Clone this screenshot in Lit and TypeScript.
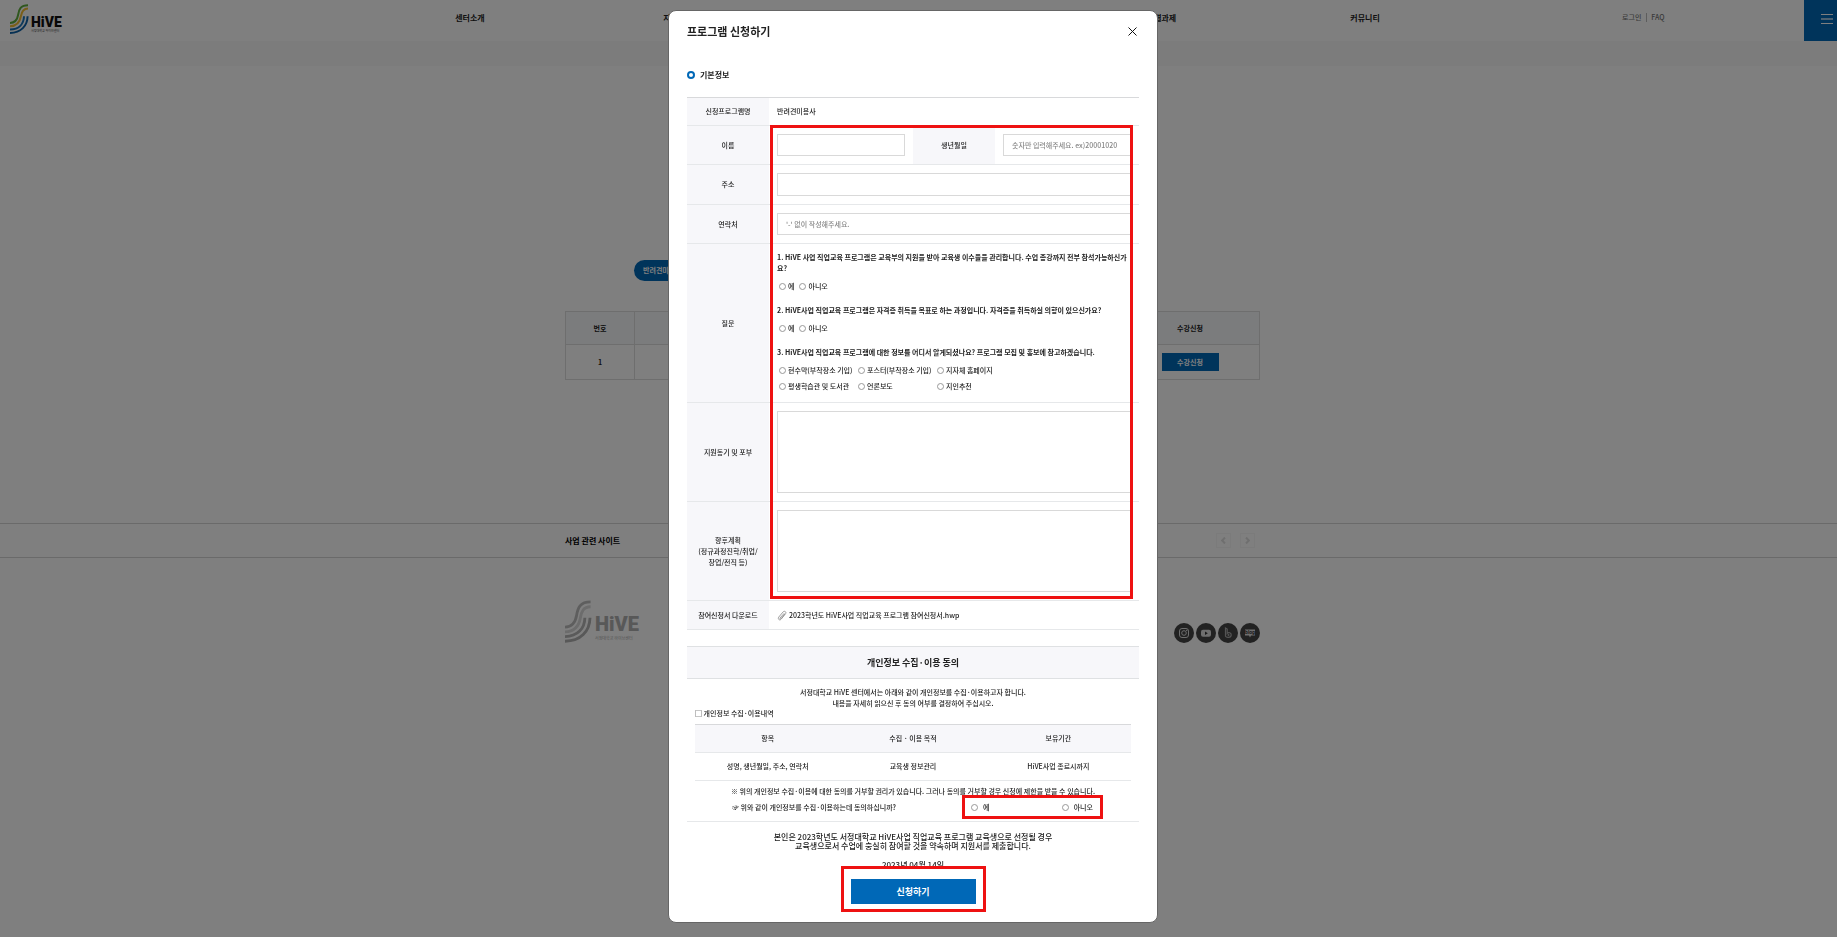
import { LitElement, html, css, svg } from "lit";
import { customElement, property } from "lit/decorators.js";

@customElement("hive-logo")
export class HiveLogo extends LitElement {
  @property({ type: Boolean, reflect: true }) mono = false;

  static styles = css`
    :host {
      display: flex;
      gap: 2px;
      color: #111;
    }
    .mark {
      width: 19px;
      height: 30px;
    }
    .words {
      display: flex;
      flex-direction: column;
      justify-content: flex-end;
    }
    .name {
      font: 900 14px/12px Roboto, "Liberation Sans", sans-serif;
    }
    .sub {
      font-size: 3px;
      line-height: 6px;
      white-space: nowrap;
      color: #444;
    }
    :host([mono]) {
      gap: 3px;
      color: #b0b0b0;
    }
    :host([mono]) .mark {
      width: 27px;
      height: 43px;
    }
    :host([mono]) .name {
      font-size: 20px;
      line-height: 18px;
    }
    :host([mono]) .sub {
      font-size: 4px;
      line-height: 10px;
      color: #aaa;
    }
  `;

  render() {
    const tone = this.mono
      ? ["#bdbdbd", "#d8d8d8", "#b4b4b4", "#b0b0b0"]
      : ["#5fae3c", "#f2bd33", "#1b73b8", "#0f62a8"];
    return html`
      <svg class="mark" viewBox="0 0 19 30" fill="none" stroke-width="2" aria-hidden="true">
        ${svg`
          <path stroke=${tone[0]} d="M18 1.2C10.5 1.2 9 5.5 8.2 10.5C7.3 16 5 18.8 0 19"/>
          <path stroke=${tone[1]} d="M18 4.6C13 4.6 11.6 8 10.8 12.5C9.8 18.5 6.5 22 0 22.3"/>
          <path stroke=${tone[2]} d="M14 12.3C13.8 20 9 25.3 0 25.6"/>
          <path stroke=${tone[3]} d="M17.6 12.3C17.4 22 11 28.6 0 28.9"/>
        `}
      </svg>
      <div class="words">
        <span class="name">HiVE</span>
        <span class="sub">서정대학교 하이브센터</span>
      </div>
    `;
  }
}

@customElement("site-page")
export class SitePage extends LitElement {
  static styles = css`
    :host {
      display: block;
      min-height: 100vh;
      background: #fff;
      color: #222;
    }
    a {
      color: inherit;
      text-decoration: none;
    }
    .header {
      display: flex;
      justify-content: space-between;
      height: 41px;
    }
    .brand {
      flex: 0 0 348px;
      padding: 4px 0 0 10px;
    }
    .nav {
      flex: 1;
      display: grid;
      grid-template-columns: repeat(5, 1fr);
      padding-top: 12px;
      text-align: center;
      font-size: 8px;
      line-height: 12px;
      font-weight: 700;
      white-space: nowrap;
    }
    .side {
      flex: 0 0 360px;
      display: flex;
      justify-content: space-between;
    }
    .member {
      display: flex;
      gap: 5px;
      height: 9px;
      padding: 13px 0 0 145px;
      font-size: 7px;
      line-height: 9px;
      font-weight: 500;
      color: #777;
    }
    .member a + a {
      border-left: 1px solid #bbb;
      padding-left: 4px;
    }
    .menu {
      width: 33px;
      height: 41px;
      border: 0;
      padding: 14px 4px 17px 17px;
      background: #0068b7;
      display: flex;
      flex-direction: column;
      justify-content: space-between;
    }
    .menu i {
      height: 1px;
      background: #fff;
    }
    .menu i:nth-child(2) {
      height: 2px;
      opacity: 0.6;
    }
    .strip {
      height: 25px;
      background: #f8f8f8;
    }
    .inner {
      width: 695px;
      max-width: 100%;
      margin: 0 auto;
    }
    .body,
    .links,
    .footer {
      padding-right: 12px;
    }
    .body {
      padding-top: 194px;
      height: 263px;
    }
    .pill {
      display: block;
      width: 58px;
      margin: 0 0 30px 69px;
      padding: 0 9px;
      border-radius: 11px;
      background: #0068b7;
      color: #fff;
      font-size: 7px;
      line-height: 21px;
      font-weight: 700;
    }
    .courses {
      width: 100%;
      table-layout: fixed;
      border-collapse: collapse;
      font-size: 7px;
      text-align: center;
    }
    .courses th,
    .courses td {
      border: 1px solid #dcdcdc;
      height: 35px;
      padding: 0;
      box-sizing: border-box;
      font-weight: 700;
    }
    .courses th {
      height: 33px;
      background: #f7f8fb;
    }
    .courses .no {
      width: 69px;
    }
    .courses .go {
      width: 139px;
    }
    .apply {
      width: 57px;
      height: 18px;
      border: 0;
      padding: 0;
      background: #0068b7;
      color: #fff;
      font: inherit;
      font-weight: 700;
    }
    .links {
      border: solid #d4d4d4;
      border-width: 1px 0;
    }
    .links .inner {
      display: flex;
      align-items: center;
      justify-content: space-between;
      height: 33px;
    }
    .links h2 {
      margin: 0;
      font-size: 8px;
      font-weight: 700;
      color: #000;
    }
    .arrows {
      display: flex;
      gap: 9px;
      padding-right: 5px;
    }
    .arrows button {
      width: 15px;
      height: 15px;
      padding: 0;
      border: 1px solid #f7f7f7;
      background: none;
      display: grid;
      place-items: center;
    }
    .arrows svg {
      width: 5px;
      height: 7px;
      fill: none;
      stroke: #dedede;
      stroke-width: 2;
    }
    .footer .inner {
      display: flex;
      justify-content: space-between;
      align-items: flex-end;
      padding-top: 42px;
    }
    .social {
      display: flex;
      gap: 2px;
    }
    .social svg {
      display: block;
      width: 20px;
      height: 20px;
    }
    .tag {
      font: 700 5px Roboto, sans-serif;
    }
  `;

  render() {
    return html`
      <header class="header">
        <a class="brand" href="#"><hive-logo></hive-logo></a>
        <nav class="nav">
          <a href="#">센터소개</a>
          <a href="#">지역특화 분야지원</a>
          <a href="#">직업교육</a>
          <a href="#">평생 직업교육 별과제</a>
          <a href="#">커뮤니티</a>
        </nav>
        <div class="side">
          <div class="member"><a href="#">로그인</a><a href="#">FAQ</a></div>
          <button class="menu" aria-label="전체메뉴"><i></i><i></i><i></i></button>
        </div>
      </header>
      <div class="strip"></div>
      <main class="body">
        <div class="inner">
          <a class="pill" href="#">반려견미용사</a>
          <table class="courses">
            <thead>
              <tr><th class="no">번호</th><th></th><th class="go">수강신청</th></tr>
            </thead>
            <tbody>
              <tr><td>1</td><td></td><td><button class="apply">수강신청</button></td></tr>
            </tbody>
          </table>
        </div>
      </main>
      <section class="links">
        <div class="inner">
          <h2>사업 관련 사이트</h2>
          <div class="arrows">
            <button aria-label="이전"><svg viewBox="0 0 5 7"><path d="M4 .5L1.200 3.500L4 6.500"/></svg></button>
            <button aria-label="다음"><svg viewBox="0 0 5 7"><path d="M1 .5L3.800 3.500L1 6.500"/></svg></button>
          </div>
        </div>
      </section>
      <footer class="footer">
        <div class="inner">
          <hive-logo mono></hive-logo>
          <div class="social">
            <a href="#" aria-label="인스타그램">
              <svg viewBox="0 0 20 20"><circle cx="10" cy="10" r="10" fill="#444"/><g fill="none" stroke="#ddd"><rect x="5.500" y="5.500" width="9" height="9" rx="2.500"/><circle cx="10" cy="10" r="2.300"/></g><circle cx="12.700" cy="7.400" r=".7" fill="#ddd"/></svg>
            </a>
            <a href="#" aria-label="유튜브">
              <svg viewBox="0 0 20 20"><circle cx="10" cy="10" r="10" fill="#444"/><rect x="5" y="6.700" width="10" height="7" rx="2" fill="#ddd"/><path d="M9 8.500v3.400l2.800-1.700z" fill="#333"/></svg>
            </a>
            <a href="#" aria-label="밴드">
              <svg viewBox="0 0 20 20"><circle cx="10" cy="10" r="10" fill="#444"/><path d="M7.500 5v8.300c.9 1.500 5.500 1.600 5.700-1.200c.1-2.500-2.600-3.200-4-1.700V6z" fill="none" stroke="#aaa" stroke-width="1.200"/><circle cx="10.500" cy="12" r="1" fill="#aaa"/></svg>
            </a>
            <a href="#" aria-label="블로그">
              <svg viewBox="0 0 20 20"><circle cx="10" cy="10" r="10" fill="#444"/><path d="M5 6.500h10v6h-4l-1 2l-1-2H5z" fill="#ddd"/><text class="tag" x="10" y="11.400" text-anchor="middle" fill="#333">blog</text></svg>
            </a>
          </div>
        </div>
      </footer>
    `;
  }
}

@customElement("apply-dialog")
export class ApplyDialog extends LitElement {
  static styles = css`
    :host {
      display: grid;
      justify-content: center;
      position: fixed;
      inset: 0;
      padding: 10px 11px 14px 0;
      background: rgba(0, 0, 0, 0.5);
      color: #222;
    }
    *,
    *::before {
      box-sizing: border-box;
    }
    .dialog {
      width: 490px;
      min-height: 0;
      display: flex;
      flex-direction: column;
      padding: 0 18px;
      border: 1px solid #666;
      border-radius: 8px;
      background: #fff;
      overflow: hidden;
      font-size: 7px;
      line-height: 11px;
      font-weight: 500;
    }
    .top {
      flex: none;
      display: flex;
      justify-content: space-between;
      align-items: center;
      height: 41px;
    }
    .top h1 {
      margin: 0;
      font-size: 11px;
      font-weight: 700;
      color: #222;
    }
    .close {
      width: 13px;
      height: 13px;
      padding: 2px;
      border: 0;
      background: none;
    }
    .close svg {
      display: block;
      width: 9px;
      height: 9px;
      stroke: #111;
    }
    .content {
      flex: 1;
      min-height: 0;
      overflow: hidden;
    }
    .heading {
      display: flex;
      align-items: center;
      gap: 5px;
      margin: 16px 0;
      font-size: 8px;
      line-height: 13px;
      font-weight: 700;
      color: #222;
    }
    .heading::before {
      content: "";
      width: 8px;
      height: 8px;
      border: 2px solid #0068b7;
      border-radius: 50%;
    }
    .sheet {
      position: relative;
    }
    .marker {
      position: absolute;
      inset: 28px 6px 31px 83px;
      border: 3px solid #ee1111;
      pointer-events: none;
    }
    table {
      width: 100%;
      table-layout: fixed;
      border-spacing: 0;
      border-top: 1px solid #d8d9db;
    }
    th,
    td {
      padding: 8px;
      border-bottom: 1px solid #e6e8ea;
      font-weight: 500;
    }
    th {
      background: #f7f7fa;
      text-align: center;
    }
    .info th {
      padding: 8px 4px;
    }
    .c1,
    .c3 {
      width: 82px;
    }
    .c2 {
      width: 144px;
    }
    .text,
    .area {
      display: block;
      width: 100%;
      height: 22px;
      margin: 0;
      padding: 0 8px;
      border: 1px solid #d9d9d9;
      border-radius: 0;
      background: #fff;
      font: inherit;
      resize: none;
      outline: 0;
    }
    .text.tall {
      height: 23px;
    }
    .text::placeholder {
      color: #888;
    }
    .area {
      height: 82px;
    }
    .questions {
      display: grid;
      gap: 13px;
      padding: 8px 0 10px 8px;
    }
    .wrap {
      padding: 0;
    }
    fieldset {
      margin: 0;
      padding: 0;
      border: 0;
      min-width: 0;
    }
    legend {
      padding: 0;
      margin-bottom: 7px;
      font-weight: 700;
    }
    .choices {
      display: flex;
      gap: 5px;
      padding-left: 2px;
    }
    .sources {
      display: grid;
      grid-template-columns: repeat(3, 79px);
      gap: 5px 0;
      padding-left: 2px;
      white-space: nowrap;
    }
    .choice {
      display: flex;
      align-items: center;
      gap: 2px;
    }
    .choice input {
      appearance: none;
      flex: none;
      width: 7px;
      height: 7px;
      margin: 0;
      border: 1px solid #999;
      border-radius: 50%;
      background: #fff;
    }
    .choice input:checked {
      background: #0068b7;
    }
    .file {
      display: flex;
      align-items: center;
      gap: 2px;
      height: 12px;
      color: #222;
      text-decoration: none;
    }
    .file svg {
      width: 10px;
      height: 11px;
      fill: none;
      stroke: #888;
    }
    .consent {
      margin-top: 16px;
      border-bottom: 1px solid #e6e8ea;
      height: 176px;
    }
    .consent h2 {
      margin: 0;
      border: solid #dfe1e3;
      border-width: 1px 0;
      background: #f7f7fa;
      font-size: 9px;
      line-height: 31px;
      font-weight: 700;
      text-align: center;
      color: #222;
    }
    .intro {
      margin: 8px 0 0;
      text-align: center;
    }
    .inset {
      margin: 0 8px;
    }
    .caption {
      margin: 0 0 6px;
      line-height: 9px;
    }
    .inset td {
      text-align: center;
    }
    .notice {
      margin: 5px 0 0;
      text-align: center;
    }
    .ask {
      display: flex;
      justify-content: space-between;
      align-items: center;
      margin: 1px 39px 0 45px;
    }
    .answer {
      display: flex;
      justify-content: space-between;
      width: 135px;
      height: 18px;
      padding: 0 7px 0 6px;
      outline: 3px solid #ee1111;
    }
    .answer .choice {
      gap: 5px;
    }
    .pledge {
      margin: 10px 0;
      font-size: 8px;
      line-height: 9px;
      text-align: center;
    }
    .bottom {
      flex: none;
      display: flex;
      justify-content: center;
      align-items: flex-start;
      height: 56px;
      background: #fff;
    }
    .frame {
      padding: 10px 7px 5px;
      border: 3px solid #ee1111;
    }
    .submit {
      display: block;
      width: 125px;
      height: 25px;
      padding: 0;
      border: 0;
      background: #0068b7;
      color: #fff;
      font: inherit;
      font-size: 9px;
      font-weight: 700;
    }
  `;

  private choice(name: string, text: string) {
    return html`<label class="choice"><input type="radio" name=${name} value=${text} />${text}</label>`;
  }

  render() {
    const sources = [
      "현수막(부착장소 기입)",
      "포스터(부착장소 기입)",
      "지자체 홈페이지",
      "평생학습관 및 도서관",
      "언론보도",
      "지인추천",
    ];
    return html`
      <div class="dialog" role="dialog" aria-labelledby="title">
        <header class="top">
          <h1 id="title">프로그램 신청하기</h1>
          <button class="close" aria-label="닫기">
            <svg viewBox="0 0 9 9"><path d="M.5 .5L8.500 8.500M8.500 .5L.5 8.500"/></svg>
          </button>
        </header>
        <div class="content">
          <h2 class="heading">기본정보</h2>
          <div class="sheet">
            <table class="info">
              <colgroup><col class="c1" /><col class="c2" /><col class="c3" /><col /></colgroup>
              <tr>
                <th>신청프로그램명</th>
                <td colspan="3">반려견미용사</td>
              </tr>
              <tr>
                <th><label for="name">이름</label></th>
                <td><input class="text" id="name" /></td>
                <th><label for="birth">생년월일</label></th>
                <td><input class="text" id="birth" placeholder="숫자만 입력해주세요. ex)20001020" /></td>
              </tr>
              <tr>
                <th><label for="address">주소</label></th>
                <td colspan="3"><input class="text tall" id="address" /></td>
              </tr>
              <tr>
                <th><label for="phone">연락처</label></th>
                <td colspan="3"><input class="text" id="phone" placeholder="'-' 없이 작성해주세요." /></td>
              </tr>
              <tr>
                <th>질문</th>
                <td class="wrap" colspan="3">
                  <div class="questions">
                    <fieldset>
                      <legend>1. HiVE 사업 직업교육 프로그램은 교육부의 지원을 받아 교육생 이수율을 관리합니다. 수업 종강까지 전부 참석가능하신가<br />요?</legend>
                      <div class="choices">${this.choice("q1", "예")}${this.choice("q1", "아니오")}</div>
                    </fieldset>
                    <fieldset>
                      <legend>2. HiVE사업 직업교육 프로그램은 자격증 취득을 목표로 하는 과정입니다. 자격증을 취득하실 의향이 있으신가요?</legend>
                      <div class="choices">${this.choice("q2", "예")}${this.choice("q2", "아니오")}</div>
                    </fieldset>
                    <fieldset>
                      <legend>3. HiVE사업 직업교육 프로그램에 대한 정보를 어디서 알게되셨나요? 프로그램 모집 및 홍보에 참고하겠습니다.</legend>
                      <div class="sources">${sources.map((s) => this.choice("q3", s))}</div>
                    </fieldset>
                  </div>
                </td>
              </tr>
              <tr>
                <th><label for="motive">지원동기 및 포부</label></th>
                <td colspan="3"><textarea class="area" id="motive"></textarea></td>
              </tr>
              <tr>
                <th><label for="plan">향후계획<br />(정규과정진학/취업/<br />창업/전직 등)</label></th>
                <td colspan="3"><textarea class="area" id="plan"></textarea></td>
              </tr>
              <tr>
                <th>참여신청서 다운로드</th>
                <td colspan="3">
                  <a class="file" href="#">
                    <svg viewBox="0 0 10 11"><path d="M3 8L7.300 3.200M1.800 7L6 2C7.500 .3 9.800 2 8.500 3.800L4.300 9C2.800 11 .3 9.300 1.800 7M3 8C2.500 9 3.800 9.300 4.200 8.500L7.800 4" stroke-width=".8"/></svg>
                    2023학년도 HiVE사업 직업교육 프로그램 참여신청서.hwp
                  </a>
                </td>
              </tr>
            </table>
            <div class="marker"></div>
          </div>
          <section class="consent">
            <h2>개인정보 수집·이용 동의</h2>
            <p class="intro">서정대학교 HiVE 센터에서는 아래와 같이 개인정보를 수집·이용하고자 합니다.<br />내용을 자세히 읽으신 후 동의 여부를 결정하여 주십시오.</p>
            <div class="inset">
              <p class="caption">□ 개인정보 수집·이용내역</p>
              <table>
                <tr><th>항목</th><th>수집 · 이용 목적</th><th>보유기간</th></tr>
                <tr><td>성명, 생년월일, 주소, 연락처</td><td>교육생 정보관리</td><td>HiVE사업 종료시까지</td></tr>
              </table>
            </div>
            <p class="notice">※ 위의 개인정보 수집·이용에 대한 동의를 거부할 권리가 있습니다. 그러나 동의를 거부할 경우 신청에 제한을 받을 수 있습니다.</p>
            <div class="ask">
              <span>☞ 위와 같이 개인정보를 수집·이용하는데 동의하십니까?</span>
              <div class="answer" role="radiogroup" aria-label="동의 여부">
                ${this.choice("agree", "예")}${this.choice("agree", "아니오")}
              </div>
            </div>
          </section>
          <p class="pledge">본인은 2023학년도 서정대학교 HiVE사업 직업교육 프로그램 교육생으로 선정될 경우<br />교육생으로서 수업에 충실히 참여할 것을 약속하며 지원서를 제출합니다.</p>
          <p class="pledge">2023년 04월 14일</p>
        </div>
        <footer class="bottom">
          <div class="frame"><button class="submit">신청하기</button></div>
        </footer>
      </div>
    `;
  }
}

@customElement("app-root")
export class AppRoot extends LitElement {
  static styles = css`
    :host {
      display: block;
      font-family: "Noto Sans CJK KR", "Noto Sans", sans-serif;
    }
  `;

  render() {
    return html`<site-page></site-page><apply-dialog></apply-dialog>`;
  }
}
